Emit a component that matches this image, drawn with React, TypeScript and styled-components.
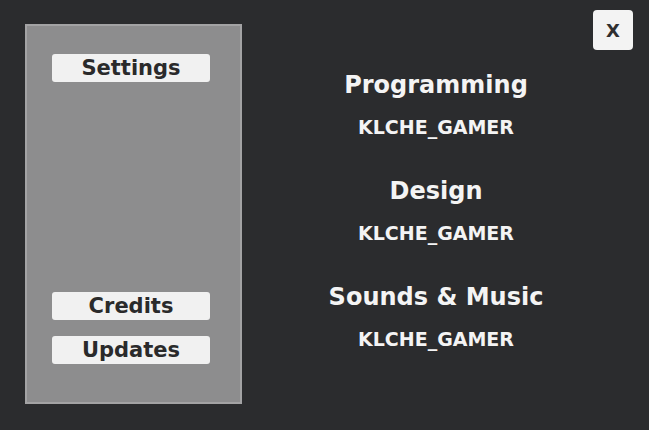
import styled, { createGlobalStyle } from "styled-components";

const GlobalStyle = createGlobalStyle`
  html, body {
    margin: 0;
    padding: 0;
    background-color: #2b2c2e;
    font-family: "DejaVu Sans", "Noto Sans", sans-serif;
  }
`;

const Screen = styled.div`
  position: relative;
  width: 649px;
  height: 430px;
  display: flex;
  align-items: flex-start;
  padding: 24px 0 0 25px;
  box-sizing: border-box;
  overflow: hidden;
`;

const SidePanel = styled.div`
  width: 217px;
  height: 380px;
  box-sizing: border-box;
  background-color: #8d8d8e;
  border: 2px solid #a3a3a4;
  display: flex;
  flex-direction: column;
  align-items: flex-start;
  padding: 28px 0 38px 25px;
`;

const Spacer = styled.div`
  flex: 1;
`;

const MenuButton = styled.button<{ $gap?: number }>`
  width: 158px;
  height: 28px;
  margin-top: ${(p) => p.$gap ?? 0}px;
  border: none;
  border-radius: 3px;
  background-color: #f1f1f1;
  color: #2a2a2b;
  font-family: "DejaVu Sans", sans-serif;
  font-weight: bold;
  font-size: 21px;
  line-height: 28px;
  padding: 0;
  cursor: pointer;
`;

const CreditsColumn = styled.div`
  width: 388px;
  display: flex;
  flex-direction: column;
  align-items: center;
  padding-top: 46px;
`;

const Role = styled.div<{ $first?: boolean }>`
  color: #f4f4f4;
  font-weight: bold;
  font-size: 24px;
  line-height: 30px;
  margin-top: ${(p) => (p.$first ? 0 : 39)}px;
`;

const Author = styled.div`
  color: #f4f4f4;
  font-weight: bold;
  font-size: 19px;
  line-height: 20px;
  margin-top: 17px;
`;

const CloseButton = styled.button`
  position: absolute;
  top: 10px;
  right: 16px;
  width: 40px;
  height: 40px;
  border: none;
  border-radius: 4px;
  background-color: #f3f3f3;
  color: #2f2f30;
  font-family: "DejaVu Sans", sans-serif;
  font-weight: bold;
  font-size: 18px;
  padding: 0;
  cursor: pointer;
`;

const credits = [
  { role: "Programming", author: "KLCHE_GAMER" },
  { role: "Design", author: "KLCHE_GAMER" },
  { role: "Sounds & Music", author: "KLCHE_GAMER" },
];

export default function App() {
  return (
    <>
      <GlobalStyle />
      <Screen>
        <SidePanel>
          <MenuButton>Settings</MenuButton>
          <Spacer />
          <MenuButton>Credits</MenuButton>
          <MenuButton $gap={16}>Updates</MenuButton>
        </SidePanel>
        <CreditsColumn>
          {credits.map((c, i) => (
            <div key={c.role} style={{ display: "contents" }}>
              <Role $first={i === 0}>{c.role}</Role>
              <Author>{c.author}</Author>
            </div>
          ))}
        </CreditsColumn>
        <CloseButton>X</CloseButton>
      </Screen>
    </>
  );
}
